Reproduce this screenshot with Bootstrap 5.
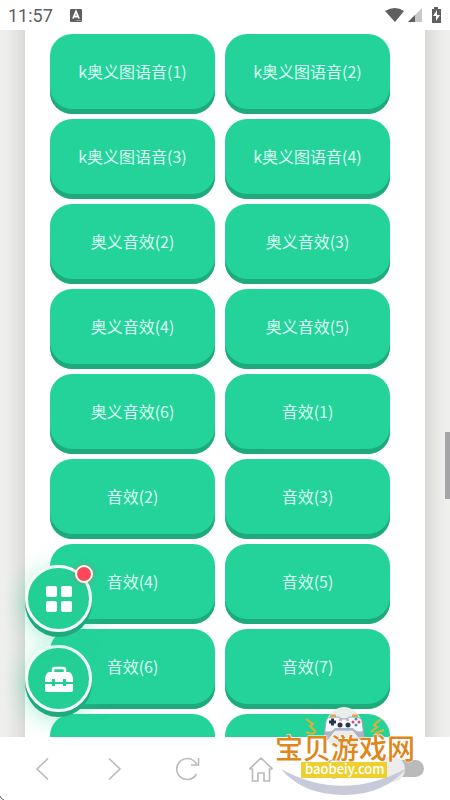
<!DOCTYPE html>
<html lang="zh-CN">
<head>
<meta charset="utf-8">
<meta name="viewport" content="width=device-width, initial-scale=1">
<title>音效</title>
<link rel="stylesheet" href="https://cdn.jsdelivr.net/npm/bootstrap@5.3.0/dist/css/bootstrap.min.css">
<style>
body { font-family: "Noto Sans CJK SC", sans-serif; background: #fff; }
.status-bar { height: 30px; padding: 2px 8px 0; color: #5f5f5f; font: 18px/28px Roboto, sans-serif; }
.stage { background: #f0f1ee; min-height: 0; }
.sheet { margin: -30px 25px 0; padding: 34px 35px 0 25px; background: #fff; box-shadow: 0 0 24px rgba(0,0,0,.2); }
.sound-grid { display: grid; grid-template-columns: 1fr 1fr; gap: 5px 10px; }
.sound-btn { height: 80px; padding: 0 0 6px; border: 0; border-radius: 22px; background: #24d39a; color: #dcfff3; font-size: 16px; box-shadow: inset 0 -5px #1eaa7d; }
.sound-btn:hover { background: #24d39a; color: #fff; }
.float-tools { left: 25px; bottom: 25px; gap: 13px; }
.round-btn { width: 67px; height: 67px; border: 3px solid #f4fffb; background: #24cf96; box-shadow: 0 5px #1eaa7d, 0 6px 24px rgba(36,211,154,.45); }
.round-btn:hover { border-color: #fff; background: #24d39a; }
.dot { right: -4px; top: -3px; width: 18px; height: 18px; border: 2px solid #fff; background: #ff4757; box-shadow: 0 0 5px rgba(255,71,87,.6); }
.thumb { right: 0; top: 402px; width: 5px; height: 67px; background: #a5a4a7; }
.tool-bar { height: 63px; padding: 0 6px; }
.tool-bar svg { display: block; fill: none; stroke: #bababa; stroke-width: 1.6; }
.form-check-input.slide-toggle { width: 33px; height: 17px; margin: 0; border: 0; border-radius: 9px; background: #bababa; }
.slide-toggle::before { content: ""; position: absolute; left: -12px; top: -4px; width: 26px; height: 26px; border-radius: 50%; background: #ececec; }
.brand-mark { right: 26px; bottom: 3px; width: 152px; height: 92px; pointer-events: none; }
.brand-name { font: 500 28px "Noto Sans CJK SC", sans-serif; fill: #df861c; stroke: #fff; stroke-width: 1px; paint-order: stroke; stroke-linejoin: round; }
.brand-site { font: 500 13px "Noto Sans CJK SC", sans-serif; fill: #fff; }
.screen-corner { left: 0; bottom: 0; width: 4px; height: 4px; }
</style>
<script src="https://cdn.jsdelivr.net/npm/bootstrap@5.3.0/dist/js/bootstrap.bundle.min.js"></script>
</head>
<body>
<div class="vh-100 d-flex flex-column overflow-hidden position-relative">
<header class="status-bar d-flex align-items-center flex-shrink-0">
<span>11:57</span>
<svg class="ms-3" width="14" height="16" viewBox="0 0 14 16"><rect x="1" y="1" width="12" height="13" rx="1" fill="#5f5f5f"/><path d="M4 10.500 7 3.500l3 7M5 8.500h4" fill="none" stroke="#fff" stroke-width="1.800"/><path d="M7 12.500h5" stroke="#999"/></svg>
<svg class="ms-auto" width="60" height="18" viewBox="0 0 60 18"><path d="M3 4Q13-2 22 4L13 15Z" fill="#5f5f5f"/><path d="M26 15 40 1v14z" fill="#c8c8c8"/><path d="M26 15 33 8v7z" fill="#5f5f5f"/><path d="M50 2h2V0h4v2h3v14h-9z" fill="#5f5f5f"/><path d="m55 3-4 6h3v5l4-6h-3z" fill="#fff"/></svg>
</header>
<main class="stage flex-fill overflow-hidden position-relative">
<div class="sheet"><div class="sound-grid">
<button class="btn sound-btn">k奥义图语音(1)</button><button class="btn sound-btn">k奥义图语音(2)</button>
<button class="btn sound-btn">k奥义图语音(3)</button><button class="btn sound-btn">k奥义图语音(4)</button>
<button class="btn sound-btn">奥义音效(2)</button><button class="btn sound-btn">奥义音效(3)</button>
<button class="btn sound-btn">奥义音效(4)</button><button class="btn sound-btn">奥义音效(5)</button>
<button class="btn sound-btn">奥义音效(6)</button><button class="btn sound-btn">音效(1)</button>
<button class="btn sound-btn">音效(2)</button><button class="btn sound-btn">音效(3)</button>
<button class="btn sound-btn">音效(4)</button><button class="btn sound-btn">音效(5)</button>
<button class="btn sound-btn">音效(6)</button><button class="btn sound-btn">音效(7)</button>
<button class="btn sound-btn" aria-label="音效(8)"></button><button class="btn sound-btn" aria-label="音效(9)"></button>
</div></div>
<div class="thumb position-absolute"></div>
<div class="float-tools position-absolute d-flex flex-column">
<button class="btn round-btn rounded-circle p-0 position-relative d-flex align-items-center justify-content-center" aria-label="菜单"><svg width="26" height="26" fill="#fff"><rect width="11" height="11" rx="2"/><rect x="15" width="11" height="11" rx="2"/><rect y="15" width="11" height="11" rx="2"/><rect x="15" y="15" width="11" height="11" rx="2"/></svg><span class="dot position-absolute rounded-circle"></span></button>
<button class="btn round-btn rounded-circle p-0 d-flex align-items-center justify-content-center" aria-label="工具箱"><svg width="28" height="26" viewBox="0 0 28 26"><path d="M8 7V4q0-2 2-2h8q2 0 2 2v3" fill="none" stroke="#fff" stroke-width="2.500"/><path d="M5 6h18q3 0 4 3l1 3v4h-7v-3h-3v3h-8v-3H7v3H0v-4l1-3q1-3 4-3zM0 18h7v2h3v-2h8v2h3v-2h7v6q0 2-2 2H2q-2 0-2-2z" fill="#fff"/></svg></button>
</div>
</main>
<nav class="tool-bar d-flex align-items-center flex-shrink-0 bg-white" aria-label="浏览器">
<div class="row g-0 w-100 row-cols-6 align-items-center">
<div class="col d-flex justify-content-center"><button class="btn border-0 p-0" aria-label="后退"><svg width="24" height="24"><path d="M18 1.500 7 12l11 10.500"/></svg></button></div>
<div class="col d-flex justify-content-center"><button class="btn border-0 p-0" aria-label="前进"><svg width="24" height="24"><path d="M6 1.500 17 12 6 22.500"/></svg></button></div>
<div class="col d-flex justify-content-center"><button class="btn border-0 p-0" aria-label="刷新"><svg width="24" height="24"><path d="M20.500 17A10.500 10.500 0 1 1 20.500 7M22.500 1v7H15"/></svg></button></div>
<div class="col d-flex justify-content-center"><button class="btn border-0 p-0" aria-label="主页"><svg width="24" height="26"><path d="M.5 13 12 2l11.500 11M.5 13h3v12H9v-8h6v8h5.500V13h3"/></svg></button></div>
<div class="col d-flex justify-content-center"><button class="btn border-0 p-0" aria-label="窗口"><svg width="24" height="24"><circle cx="12" cy="12" r="9"/></svg></button></div>
<div class="col d-flex justify-content-center"><input class="form-check-input slide-toggle position-relative" type="checkbox" aria-label="模式"></div>
</div>
</nav>
<svg class="brand-mark position-absolute" viewBox="272 705 152 92">
<path d="M281 769Q343 803 407 768Q384 795 344 795Q303 795 281 769Z" fill="#c8cad9"/>
<ellipse cx="344" cy="729" rx="19" ry="22" fill="#e9eeed"/>
<g fill="none" stroke="#e0b030" stroke-width="2"><path d="m306 719 7 5-3 2 6 6M381 719l-7 6 3 2-6 5M306 732l6 2 3-2M384 730l-8 3 4 2"/></g>
<path d="M330 716h6M352 716h6" stroke="#eaa83c" stroke-width="3"/>
<path d="M326 721q1-4 7-4h5q3 2 6 2t6-2h5q6 0 7 4l2 16q0 4-3 3l-8-10H335l-8 10q-3 1-3-3z" fill="#f7f8fb" stroke="#9da2b8"/>
<path d="M325 731q6 2 10-3h18q4 5 10 3l1 7q-1 3-3 1l-8-9h-18l-8 9q-2 2-3-1z" fill="#afb3c6"/>
<path d="M329 722h7M332.500 718.500v7" stroke="#26384a" stroke-width="3"/>
<circle cx="340" cy="725" r="2.500" fill="#26384a"/><circle cx="348" cy="725" r="2.500" fill="#26384a"/>
<path d="M339 720h3M346 720h3" stroke="#d65b67"/>
<circle cx="353" cy="722" r="1.500" fill="#dd4b64"/><circle cx="359" cy="722" r="1.500" fill="#dd4b64"/><circle cx="356" cy="719" r="1.500" fill="#3a9cb8"/><circle cx="356" cy="725" r="1.500" fill="#3a9cb8"/>
<text class="brand-name" x="275" y="759">宝贝游戏网</text>
<rect x="301" y="762" width="86" height="16" fill="#ecd02f"/>
<text class="brand-site" x="305" y="774">baobeiy.com</text>
</svg>
<svg class="screen-corner position-absolute"><path d="M0 0Q1 3 4 4" fill="none" stroke="#555"/></svg>
</div>
</body>
</html>
